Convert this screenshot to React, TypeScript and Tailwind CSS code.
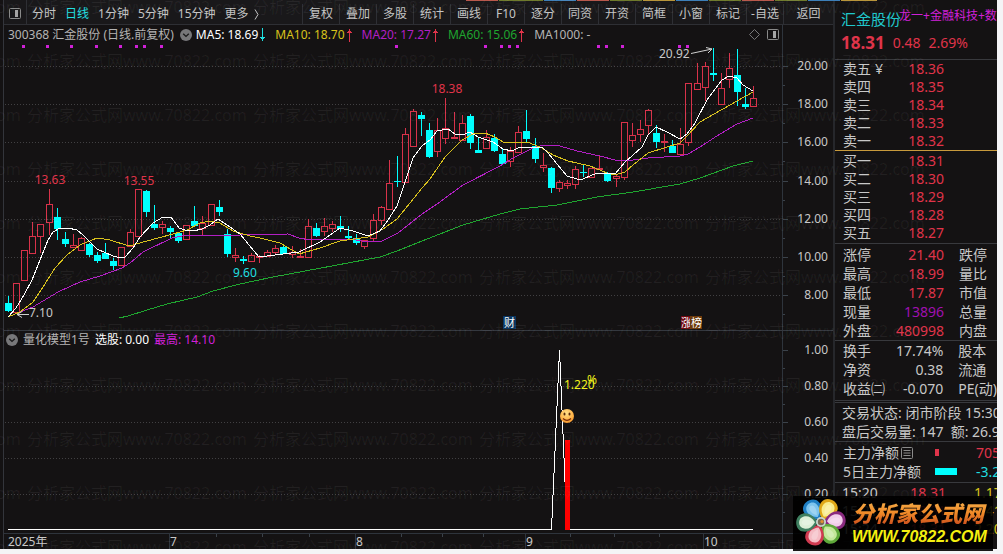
import React from 'react';

type Candle = [high: number, top: number, bottom: number, low: number, up: 0 | 1];

const FIRST_X = 8;
const STEP = 8.1;

// high, body top, body bottom, low (chart units), rising
const CANDLES: Candle[] = [
  [296, 303, 311, 312, 0], [283, 283, 312, 312, 1], [250, 250, 280, 280, 1], [222, 236, 253, 253, 1],
  [224, 224, 236, 252, 1], [189, 204, 222, 234, 1], [208, 217, 229, 240, 0], [232, 239, 244, 247, 0],
  [234, 245, 247, 247, 1], [237, 238, 250, 250, 1], [243, 244, 255, 257, 0], [252, 255, 261, 263, 0],
  [243, 253, 259, 259, 0], [258, 261, 266, 270, 0], [247, 247, 265, 265, 1], [229, 232, 246, 246, 1],
  [189, 189, 236, 236, 1], [190, 191, 212, 217, 0], [205, 224, 228, 230, 0], [221, 224, 227, 233, 1],
  [226, 228, 232, 238, 0], [233, 233, 241, 243, 0], [225, 225, 239, 239, 1], [206, 221, 226, 226, 0],
  [216, 223, 228, 235, 1], [204, 204, 225, 225, 1], [200, 207, 212, 216, 0], [229, 234, 254, 257, 0],
  [248, 255, 257, 261, 1], [256, 259, 261, 264, 0], [253, 255, 261, 261, 1], [255, 256, 257, 262, 1],
  [250, 252, 256, 256, 1], [245, 248, 252, 254, 1], [246, 247, 254, 254, 0], [246, 252, 254, 257, 1],
  [249, 256, 257, 257, 1], [219, 226, 257, 257, 1], [223, 228, 236, 237, 0], [218, 226, 231, 235, 1],
  [221, 224, 228, 231, 1], [216, 226, 229, 232, 0], [226, 236, 238, 239, 0], [234, 238, 243, 245, 0],
  [240, 240, 246, 248, 1], [214, 220, 238, 240, 1], [206, 207, 220, 224, 1], [160, 183, 209, 209, 1],
  [156, 181, 182, 187, 0], [128, 134, 182, 182, 1], [109, 111, 146, 146, 1], [112, 115, 119, 136, 0],
  [123, 130, 157, 158, 0], [118, 130, 151, 156, 1], [98, 128, 138, 143, 1], [112, 137, 138, 138, 1],
  [115, 123, 140, 140, 1], [114, 116, 143, 149, 0], [138, 150, 153, 153, 0], [130, 137, 148, 148, 1],
  [134, 138, 151, 152, 0], [149, 154, 164, 164, 0], [147, 151, 161, 166, 1], [126, 132, 152, 152, 1],
  [110, 131, 139, 143, 0], [138, 146, 159, 163, 0], [153, 165, 167, 171, 1], [167, 168, 188, 193, 0],
  [180, 182, 188, 191, 1], [180, 183, 185, 188, 1], [166, 169, 184, 188, 1], [164, 172, 173, 177, 0],
  [168, 168, 177, 177, 1], [156, 168, 169, 169, 1], [172, 173, 181, 182, 0], [175, 176, 178, 186, 1],
  [122, 122, 177, 179, 1], [123, 135, 140, 146, 1], [120, 129, 134, 141, 1], [109, 110, 125, 133, 1],
  [125, 133, 142, 148, 0], [134, 141, 142, 151, 1], [140, 146, 153, 153, 0], [128, 144, 154, 154, 1],
  [83, 83, 142, 145, 1], [63, 83, 89, 89, 1], [62, 66, 87, 100, 1], [48, 73, 75, 81, 0],
  [73, 88, 104, 104, 1], [53, 68, 79, 87, 1], [49, 75, 92, 106, 0], [88, 104, 107, 109, 0],
  [86, 98, 106, 106, 1],
];

const AVERAGES = [
  {
    name: 'MA60',
    color: '#1fa52f',
    points:
      '119,318 128,316 147,310 167,304 197,297 213,291 240,284 273,277 380,257 397,251 422,241 463,225 500,214 520,209 557,205 597,197 633,192 680,184 700,178 733,166 753,161',
  },
  {
    name: 'MA20',
    color: '#b21fc4',
    points:
      '8,317 20,312 33,307 58,292 80,282 100,276 122,268 130,263 143,252 172,238 187,235 240,235 288,234 299,238 310,240 350,239 362,241 380,242 398,233 422,214 437,204 463,185 500,166 513,158 533,148 543,145 560,146 577,151 600,156 615,160 633,160 648,158 680,156 688,154 700,147 720,134 737,124 753,118',
  },
  {
    name: 'MA10',
    color: '#d9c21c',
    points:
      '8,317 20,312 33,302 43,287 55,268 67,255 80,245 97,238 110,240 129,246 147,241 173,234 187,230 200,223 210,221 220,223 233,231 250,236 260,238 280,243 299,254 320,248 340,241 368,237 383,229 397,219 410,203 422,188 430,179 445,157 462,140 473,134 485,133 495,137 503,142 530,143 542,148 553,155 568,161 590,166 607,173 615,175 625,172 633,165 648,153 667,147 680,143 687,136 700,122 737,101 753,92',
  },
  {
    name: 'MA5',
    color: '#ffffff',
    points:
      '8,317 16,308 24,295 32,280 40,260 48,240 53,232 60,228 68,228 77,230 83,235 97,249 113,256 121,258 125,257 133,248 140,237 153,223 163,217 171,217 179,228 185,230 193,231 202,229 210,225 218,219 230,227 240,234 259,257 275,255 299,252 320,242 340,228 353,231 368,236 380,231 388,220 397,206 405,182 413,158 422,146 430,140 437,131 448,129 455,134 462,135 470,132 478,137 493,142 503,149 512,151 520,147 542,147 548,153 567,176 577,179 583,179 592,175 598,173 615,174 625,162 633,155 642,147 648,135 656,127 667,132 680,139 687,134 695,123 707,100 722,80 729,76 737,78 743,85 753,91',
  },
];

const PRICES = [
  { y: 66, label: '20.00' },
  { y: 104, label: '18.00' },
  { y: 142, label: '16.00' },
  { y: 181, label: '14.00' },
  { y: 219, label: '12.00' },
  { y: 257, label: '10.00' },
  { y: 295, label: '8.00' },
];

const LEVELS = [
  { y: 350, label: '1.00' },
  { y: 386, label: '0.80' },
  { y: 422, label: '0.60' },
  { y: 458, label: '0.40' },
  { y: 494, label: '0.20' },
];

const MONTHS = [
  { x: 169, label: '7' },
  { x: 355, label: '8' },
  { x: 525, label: '9' },
  { x: 703, label: '10' },
];

const MINOR_TICKS = [216, 262, 309, 401, 442, 483, 570, 614, 659];

const EVENT_DOTS = [
  22, 46, 70, 95, 119, 135, 143, 160, 395, 484, 500, 508, 516, 597, 605, 621, 678, 686,
];

const PERIODS = ['分时', '日线', '1分钟', '5分钟', '15分钟'];

const TOOLS = [
  '复权', '叠加', '多股', '统计', '画线', 'F10', '逐分', '同资', '开资', '简框', '小窗', '标记', '-自选',
];

const STRIP = [
  'w-8 bg-[#b8584c]', 'w-11 bg-[#6f7a2c]', 'w-8 bg-[#3d7fb8]', 'w-8 bg-[#b8584c]', 'w-8 bg-[#6f7a2c]',
  'w-8 bg-[#b8953a]', 'w-8 bg-[#3d7fb8]', 'w-8 bg-[#6f7a2c]', 'w-8 bg-[#b8584c]', 'w-8 bg-[#6f7a2c]',
  'w-8 bg-[#3d7fb8]', 'w-9 bg-[#b8953a]',
];

const SELLS = [
  ['卖五', '18.36'],
  ['卖四', '18.35'],
  ['卖三', '18.34'],
  ['卖二', '18.33'],
  ['卖一', '18.32'],
];

const BUYS = [
  ['买一', '18.31'],
  ['买二', '18.30'],
  ['买三', '18.29'],
  ['买四', '18.28'],
  ['买五', '18.27'],
];

const DAY_STATS = [
  { label: '涨停', value: '21.40', next: '跌停', color: 'text-[#e0344a]' },
  { label: '最高', value: '18.99', next: '量比', color: 'text-[#e0344a]' },
  { label: '最低', value: '17.87', next: '市值', color: 'text-[#e0344a]' },
  { label: '现量', value: '13896', next: '总量', color: 'text-[#a010b0]' },
  { label: '外盘', value: '480998', next: '内盘', color: 'text-[#e0344a]' },
];

const RATIOS = [
  { label: '换手', value: '17.74%', next: '股本', color: 'text-[#c8c8c8]' },
  { label: '净资', value: '0.38', next: '流通', color: 'text-[#c8c8c8]' },
  { label: '收益㈡', value: '-0.070', next: 'PE(动)', color: 'text-[#c8c8c8]' },
];

const TRADES = [
  ['15:20', '18.31', '1.17万'],
  ['15:21', '18.31', '4.41万'],
  ['15:24', '18.31', '2.20万'],
];

function PanelIcon() {
  return (
    <svg width="12" height="12" viewBox="0 0 12 12" fill="none" stroke="#8a8a8a">
      <rect x="0.5" y="0.5" width="11" height="10" rx="1" />
      <rect x="6" y="2" width="3" height="7" fill="#a5a5a5" stroke="none" />
    </svg>
  );
}

function ChevronDot() {
  return (
    <svg width="12" height="12" viewBox="0 0 12 12">
      <circle cx="6" cy="6" r="6" fill="#777779" />
      <path d="M3.2 4.8 6 7.4l2.8-2.6" fill="none" stroke="#1a1a1a" strokeWidth="1.4" />
    </svg>
  );
}

function Arrow({ down = false }: { down?: boolean }) {
  return (
    <svg width="5" height="14" viewBox="0 0 5 14" shapeRendering="crispEdges">
      {down ? (
        <path d="M2 0h1v9h2L2.5 13 0 9h2z" fill="#20dfe0" />
      ) : (
        <path d="M2 14h1V5h2L2.5 1 0 5h2z" fill="#e0344a" />
      )}
    </svg>
  );
}

function Toolbar() {
  return (
    <nav className="flex h-[25px] flex-col border-b border-[#2e2f34] bg-[#19181a]">
      <div className="flex flex-1 items-stretch text-xs text-[#c4c4c4]">
        <button type="button" aria-label="侧栏" className="flex w-[23px] items-center justify-center border-r border-[#2e2f34] pt-1">
          <PanelIcon />
        </button>
        <div className="flex items-center gap-[9px] pt-1 pl-[5px]">
          {PERIODS.map((p) => (
            <button key={p} type="button" className={p === '日线' ? 'text-[#20dfe0]' : undefined}>
              {p}
            </button>
          ))}
          <button type="button" className="flex items-center gap-[5px]">
            更多
            <svg width="5" height="11" viewBox="0 0 5 11" fill="none" stroke="#c4c4c4">
              <path d="M1 0.5 4 5.5 1 10.5" />
            </svg>
          </button>
        </div>
        <div className="ml-auto flex pt-1">
          {TOOLS.map((t) => (
            <button key={t} type="button" className="w-[37px] border-l border-[#2e2f34] whitespace-nowrap">
              {t}
            </button>
          ))}
          <button type="button" className="w-[50px] border-l border-[#2e2f34]">
            返回
          </button>
        </div>
      </div>
    </nav>
  );
}

function ChartHeader() {
  return (
    <div className="flex h-[19px] text-xs text-[#b4b4b4]">
      <div className="flex flex-1 items-center whitespace-nowrap pl-1">
        <span>300368 汇金股份 (日线.前复权)</span>
        <button type="button" aria-label="指标" className="mr-1 ml-1.5">
          <ChevronDot />
        </button>
        <div className="flex items-center gap-2.5">
          <span className="flex items-center gap-0.5 text-white">MA5: 18.69 <Arrow down /></span>
          <span className="flex items-center gap-0.5 text-[#d9c21c]">MA10: 18.70 <Arrow /></span>
          <span className="flex items-center gap-0.5 text-[#b21fc4]">MA20: 17.27 <Arrow /></span>
          <span className="flex items-center gap-0.5 text-[#1fa52f]">MA60: 15.06 <Arrow /></span>
          <span>MA1000: -</span>
        </div>
        <div className="mr-[3px] ml-auto flex items-center gap-[7px]">
          <svg width="11" height="11" viewBox="0 0 11 11" fill="none" stroke="#777779">
            <path d="M5.5 0.5 10.5 5.5 5.5 10.5 0.5 5.5z" />
          </svg>
          <PanelIcon />
        </div>
      </div>
      <div className="w-[51px] border-l border-[#2e343c]" />
    </div>
  );
}

function PriceChart() {
  return (
    <svg viewBox="4 44 829 286" className="block h-auto w-full text-xs">
      <g shapeRendering="crispEdges">
        {PRICES.map((p) => (
          <g key={p.label}>
            <path d={`M5 ${p.y}.5H781`} stroke="#414042" strokeDasharray="1 2" />
            <path d={`M782 ${p.y}.5H788M782 ${p.y + 19}.5H785`} stroke="#3b424a" />
          </g>
        ))}
        <path d="M782.5 44V330" stroke="#2e343c" />
        {EVENT_DOTS.map((x) => (
          <rect key={x} x={x} y="45" width="3" height="3" fill="#d020d8" />
        ))}
        {CANDLES.map(([high, top, bottom, low, up], i) => {
          const x = Math.round(FIRST_X + i * STEP);
          return up ? (
            <g key={i} fill="none" stroke="#d8324a">
              <path d={`M${x + 0.5} ${high}V${top}M${x + 0.5} ${bottom}V${low + 1}`} />
              <rect x={x - 2.5} y={top + 0.5} width="6" height={Math.max(bottom - top, 1)} />
            </g>
          ) : (
            <g key={i} fill="#00ffff">
              <rect x={x} y={high} width="1" height={low - high} />
              <rect x={x - 3} y={top} width="7" height={bottom - top} />
            </g>
          );
        })}
        {AVERAGES.map((a) => (
          <polyline key={a.name} points={a.points} fill="none" stroke={a.color} />
        ))}
      </g>
      <g fill="none" stroke="#d0d0d0">
        <path d="M29 314.5H17M22 311.5 17 314.5l5 3" />
        <path d="M691 53.5 712 49M706 47.5l6 1.5-4 4" />
      </g>
      <g fill="#c8c8c8">
        {PRICES.map((p) => (
          <text key={p.label} x="828" y={p.y + 4} textAnchor="end">{p.label}</text>
        ))}
        <text x="29" y="317">7.10</text>
        <text x="659" y="58">20.92</text>
      </g>
      <g fill="#e0344a" textAnchor="middle">
        <text x="50" y="184">13.63</text>
        <text x="139" y="185">13.55</text>
        <text x="447" y="93">18.38</text>
      </g>
      <text x="233" y="277" fill="#20dfe0">9.60</text>
      <rect x="503" y="316" width="13" height="13" fill="#0a3560" />
      <text x="504" y="327" className="text-[11px]" fill="#ffffff">财</text>
      <rect x="681" y="316" width="10" height="13" fill="#700810" />
      <text x="681" y="327" className="text-[11px]" fill="#ffffff">涨</text>
      <rect x="690" y="316" width="12" height="13" fill="#6e3a0a" />
      <text x="691" y="327" className="text-[11px]" fill="#ffffff">榜</text>
    </svg>
  );
}

function IndicatorChart() {
  return (
    <svg viewBox="4 348 829 201" className="block h-auto w-full overflow-visible text-xs">
      <g shapeRendering="crispEdges" fill="none">
        {LEVELS.map((l) => (
          <g key={l.label}>
            {l.y > 350 && <path d={`M5 ${l.y}.5H781`} stroke="#414042" strokeDasharray="1 2" />}
            <path d={`M782 ${l.y}.5H788M782 ${l.y + 18}.5H785`} stroke="#3b424a" />
          </g>
        ))}
        <path d="M782.5 348V549" stroke="#2e343c" />
        <path d="M4 533.5H833" stroke="#2e343c" />
        <path d={MONTHS.map((m) => `M${m.x}.5 534V549`).join('')} stroke="#2e343c" />
        <path d={MINOR_TICKS.map((x) => `M${x}.5 534V537`).join('')} stroke="#3b424a" />
        <path d="M8 529.5H551.5L559.5 350 567 529.5H753" stroke="#ffffff" />
        <rect x="565" y="440" width="5" height="90" fill="#ff0000" />
      </g>
      <defs>
        <radialGradient id="face" cx="0.45" cy="0.3" r="0.8">
          <stop offset="0" stopColor="#ffe08a" />
          <stop offset="0.6" stopColor="#ffb347" />
          <stop offset="1" stopColor="#f08a24" />
        </radialGradient>
      </defs>
      <circle cx="567" cy="416" r="7" fill="url(#face)" />
      <ellipse cx="564.5" cy="414" rx="1" ry="1.6" fill="#5a2a08" />
      <ellipse cx="569.5" cy="414" rx="1" ry="1.6" fill="#5a2a08" />
      <path d="M563 418.5q4 3.6 8 0" fill="none" stroke="#7a2a08" strokeWidth="1.2" />
      <g fill="#f2f21a">
        <text x="564" y="389">1.220</text>
        <text x="587" y="384">%</text>
      </g>
      <g fill="#c8c8c8">
        {LEVELS.map((l) => (
          <text key={l.label} x="828" y={l.y + 4} textAnchor="end">{l.label}</text>
        ))}
        <text x="8" y="546">2025年</text>
        {MONTHS.map((m) => (
          <text key={m.label} x={m.x + 1} y="546">{m.label}</text>
        ))}
      </g>
    </svg>
  );
}

function OrderRows({ rows }: { rows: string[][] }) {
  return (
    <table className="w-[101px]">
      <tbody>
        {rows.map(([label, price]) => (
          <tr key={label} className="h-[18px]">
            <th scope="row" className="text-left font-normal whitespace-nowrap">
              {label}
              {label === '卖五' && <span className="ml-1">¥</span>}
            </th>
            <td className="text-right text-[#e0344a]">{price}</td>
          </tr>
        ))}
      </tbody>
    </table>
  );
}

function StatRows({ rows }: { rows: typeof DAY_STATS }) {
  return (
    <table>
      <tbody>
        {rows.map((r) => (
          <tr key={r.label} className="h-[19px] whitespace-nowrap">
            <th scope="row" className="w-[50px] text-left font-normal">{r.label}</th>
            <td className={`w-[51px] text-right ${r.color}`}>{r.value}</td>
            <th scope="row" className="pl-[15px] text-left font-normal">{r.next}</th>
          </tr>
        ))}
      </tbody>
    </table>
  );
}

function QuotePanel() {
  return (
    <aside className="w-[164px] shrink-0 overflow-hidden border-l-2 border-[#26272b] text-sm leading-[18px] text-[#c8c8c8]">
      <section className="h-[60px] border-b border-[#38393d] pt-2 pl-1.5">
        <div className="flex h-[22px] whitespace-nowrap">
          <h1 className="text-[15px] leading-[22px] text-[#20c8cc]">汇金股份</h1>
          <p className="-ml-0.5 text-xs leading-[15px] text-[#d020d8]">龙一+金融科技+数字经济</p>
        </div>
        <div className="flex items-center gap-2 leading-[26px] text-[#e0344a]">
          <strong className="text-[17px]">18.31</strong>
          <span>0.48</span>
          <span>2.69%</span>
        </div>
      </section>
      <section className="border-b border-[#c89a3c] pl-2">
        <OrderRows rows={SELLS} />
      </section>
      <section className="border-b border-[#38393d] py-px pl-2">
        <OrderRows rows={BUYS} />
      </section>
      <section className="border-b border-[#38393d] pt-px pl-2">
        <StatRows rows={DAY_STATS} />
      </section>
      <section className="border-b-[3px] border-double border-[#38393d] pb-0.5 pl-2">
        <StatRows rows={RATIOS} />
      </section>
      <section className="border-b border-[#38393d] pl-[7px] leading-[19px] whitespace-nowrap">
        <p>交易状态: 闭市阶段 15:30</p>
        <p>盘后交易量: 147&nbsp; 额: 26.9万</p>
      </section>
      <section className="border-b border-[#38393d] py-px pl-2 leading-[19px] whitespace-nowrap">
        <div className="flex items-center">
          <span className="flex w-[92px] items-center gap-0.5">
            主力净额
            <svg width="12" height="12" viewBox="0 0 12 12" fill="none" stroke="#8a8a8a">
              <rect x="0.5" y="0.5" width="11" height="11" rx="1" />
              <path d="M2.5 3.5h7M2.5 6h7M2.5 8.5h7" />
            </svg>
          </span>
          <span className="h-[7px] w-1 bg-[#e0344a]" />
          <span className="ml-auto w-[21px] text-[#e0344a]">705.8</span>
        </div>
        <div className="flex items-center">
          <span className="w-[92px]">5日主力净额</span>
          <span className="h-[7px] w-[22px] bg-[#00ffff]" />
          <span className="ml-auto w-[21px] text-[#20dfe0]">-3.22</span>
        </div>
      </section>
      <table className="mt-px ml-[7px] w-48 table-fixed">
        <tbody>
          {TRADES.map(([time, price, amount]) => (
            <tr key={time} className="h-[18px] whitespace-nowrap">
              <td className="w-[50px]">{time}</td>
              <td className="w-[54px] text-right text-[#e0344a]">{price}</td>
              <td className="pl-7 text-[#d9c21c]">{amount}</td>
            </tr>
          ))}
        </tbody>
      </table>
    </aside>
  );
}

const PETALS = [
  { angle: -33, outer: '#1f7fc4', inner: '#7cc4ee' },
  { angle: 28, outer: '#e0a818', inner: '#f8ec8c' },
  { angle: 84, outer: '#8a2a80', inner: '#f2cdea' },
  { angle: 142, outer: '#5fa83a', inner: '#c4e89a' },
  { angle: 204, outer: '#d03a50', inner: '#f5bcc4' },
  { angle: 268, outer: '#3f7f60', inner: '#dcefd8' },
];

function SiteBadge() {
  return (
    <a href="#home" className="absolute right-2.5 bottom-[3px] flex h-[55px] w-[200px] items-center bg-black/90">
      <svg width="54" height="54" viewBox="-28 -25 54 54" className="shrink-0">
        {PETALS.map((p) => (
          <g key={p.angle} transform={`rotate(${p.angle})`}>
            <path d="M0 -3C-7 -7 -10 -13 -9 -18C-7.5 -27 7.5 -27 9 -18C10 -13 7 -7 0 -3Z" fill={p.outer} />
            <path d="M0 -6C-5 -9 -7 -13 -6 -17C-4.8 -23.5 4.8 -23.5 6 -17C7 -13 5 -9 0 -6Z" fill={p.inner} />
            <path d="M0 -8C-2.5 -11 -3.4 -14 -2.8 -17C-2 -20 2 -20 2.8 -17C3.4 -14 2.5 -11 0 -8Z" fill="#ffffff" opacity="0.25" />
          </g>
        ))}
        <circle r="5" fill="#c8d4cc" />
        <circle r="3.2" fill="#7a6a54" />
        <circle cx="1" cy="-0.5" r="1.6" fill="#e09030" />
      </svg>
      <span className="flex flex-col pl-[5px] whitespace-nowrap italic">
        <span className="bg-linear-to-b from-[#f5b04a] via-[#f08a28] to-[#c8481c] bg-clip-text text-[22px] leading-[26px] font-black text-transparent">
          分析家公式网
        </span>
        <span className="font-['Liberation_Sans',sans-serif] text-base leading-[22px] font-bold text-[#f5f010]">
          WWW.70822.COM
        </span>
      </span>
    </a>
  );
}

function Watermark() {
  return (
    <div aria-hidden="true" className="pointer-events-none absolute inset-0 overflow-hidden">
      <div className="-mt-5 -ml-[199px] text-base leading-[54px] text-white/[0.06]">
        {Array.from({ length: 11 }, (_, row) => (
          <div key={row} className="flex">
            {Array.from({ length: 5 }, (_, col) => (
              <span key={col} className="w-[226px] shrink-0 whitespace-nowrap">
                分析家公式网www.70822.com
              </span>
            ))}
          </div>
        ))}
      </div>
    </div>
  );
}

export default function App() {
  return (
    <div className="relative min-h-screen bg-[#f4f4f6] pr-1.5 pb-[5px] font-['Noto_Sans','Noto_Sans_CJK_SC',sans-serif]">
      <div className="relative flex overflow-hidden bg-[#141213]">
        <div className="w-1 shrink-0 border-r border-[#33353b]" />
        <main className="min-w-0 flex-1">
          <Toolbar />
          <ChartHeader />
          <PriceChart />
          <div className="flex h-[18px] border-t border-[#34383f] text-xs leading-4 whitespace-nowrap">
            <div className="flex flex-1 items-center gap-[5px] pl-0.5">
              <button type="button" aria-label="指标">
                <ChevronDot />
              </button>
              <span className="text-[#b4b4b4]">量化模型1号</span>
              <span className="text-white">选股: 0.00</span>
              <span className="text-[#d020d8]">最高: 14.10</span>
            </div>
            <div className="w-[51px] border-l border-[#2e343c]" />
          </div>
          <IndicatorChart />
        </main>
        <QuotePanel />
        <div aria-hidden="true" className="absolute top-0 right-[120px] flex h-px gap-px">
          {STRIP.map((c, i) => (
            <i key={i} className={c} />
          ))}
        </div>
        <Watermark />
      </div>
      <SiteBadge />
    </div>
  );
}
